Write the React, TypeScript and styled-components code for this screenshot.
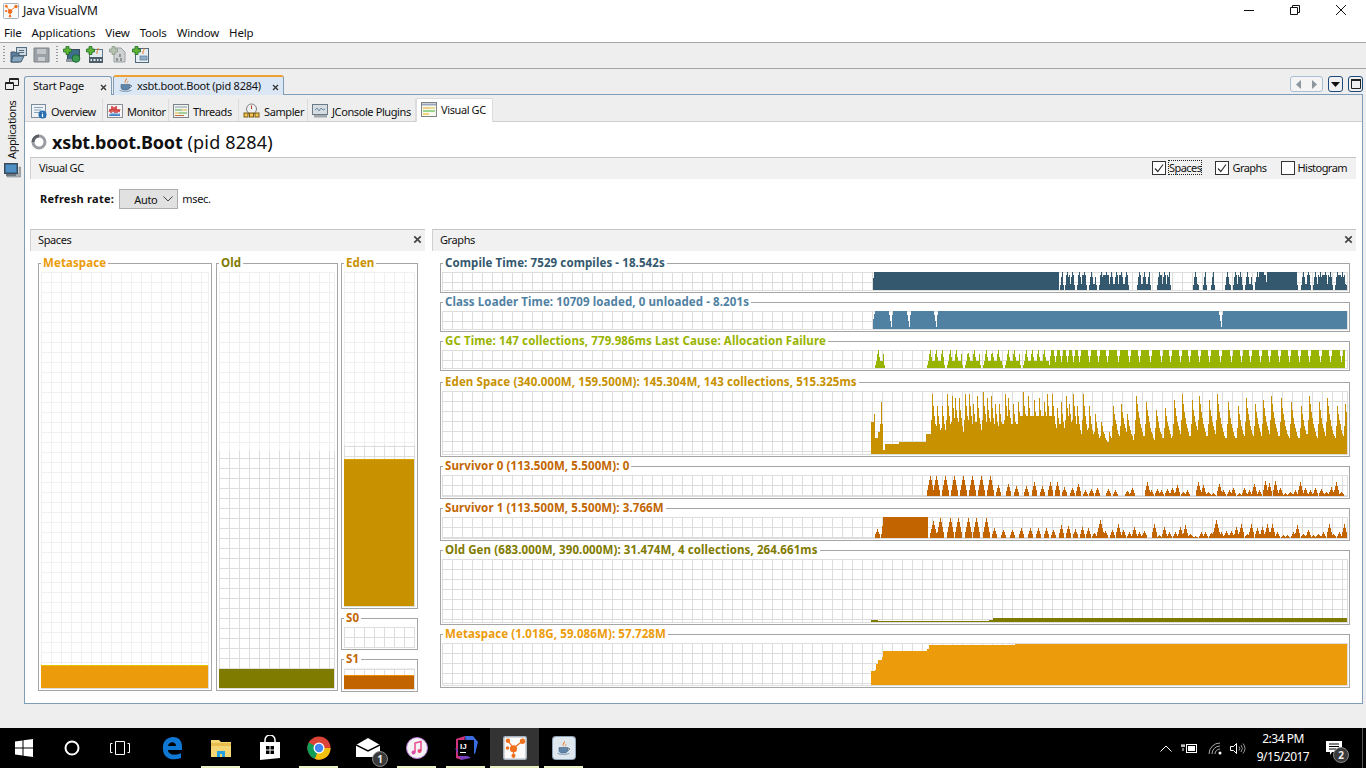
import React from 'react';
import styled, {createGlobalStyle} from 'styled-components';

const UI_FONT = '"Noto Sans", "Open Sans", sans-serif';
const CHART_W = 906;
const CHART_X0 = 442;

const GlobalStyle = createGlobalStyle`
  html, body {
    margin: 0;
    padding: 0;
    background: #eee;
  }
  * {
    box-sizing: border-box;
  }
`;

/* chart data */
let seed = 7;
const rnd = () => {
  seed = (seed * 16807) % 2147483647;
  return seed / 2147483647;
};
const at = (x: number) => x - CHART_X0;
const blank = () => new Array(CHART_W).fill(0) as number[];

const compileData = () => {
  const d = blank();
  for (let x = 873; x < 1059; x++) d[at(x)] = 18;
  d[at(873)] = 12;
  const bursts = [
    [1060, 1064], [1065, 1075], [1077, 1087], [1089, 1097], [1099, 1129], [1137, 1151],
    [1157, 1171], [1193, 1199], [1203, 1207], [1211, 1215], [1225, 1231], [1233, 1243],
    [1245, 1253], [1255, 1267], [1297, 1298], [1301, 1311], [1313, 1333], [1335, 1347],
  ];
  bursts.forEach(([a, b]) => {
    for (let x = a; x < b; x++) {
      const edge = Math.min(x - a, b - 1 - x);
      const t = (x - a) % 5;
      let h = t === 2 ? 18 : t === 1 || t === 3 ? 13 : 6;
      if (b - a > 9 && rnd() > 0.6) h = Math.max(h, 15);
      if (edge === 0) h = Math.min(h, 5);
      d[at(x)] = h;
    }
  });
  for (let x = 1267; x < 1297; x++) d[at(x)] = 18;
  for (let x = 1255; x < 1267; x++) d[at(x)] = Math.max(d[at(x)], x > 1258 && x < 1264 ? 18 : 8);
  return d;
};

const classData = () => {
  const d = blank();
  for (let x = 873; x < 1347; x++) d[at(x)] = 18;
  d[at(873)] = 10;
  d[at(874)] = 15;
  [889, 907, 934, 1219].forEach((n) => {
    d[at(n)] = 14;
    d[at(n + 1)] = 8;
    d[at(n + 2)] = 2;
    d[at(n + 3)] = 14;
  });
  return d;
};

const gcData = () => {
  const d = blank();
  const spikes = (a: number, b: number) => {
    for (let x = a; x < b; x++) {
      const t = (x - a) % 6;
      let h = t === 3 ? (rnd() > 0.3 ? 18 : 15) : t === 2 ? 14 : t === 4 ? 11 : 7;
      if (x === a || x === b - 1) h = 3;
      d[at(x)] = h;
    }
  };
  spikes(875, 885);
  [[927, 945], [947, 963], [965, 981], [983, 1003], [1005, 1021], [1023, 1050]].forEach(([a, b]) => spikes(a, b));
  let x = 1050;
  while (x < 1345) {
    const w = x < 1075 ? 6 : 9 + Math.floor(rnd() * 3);
    for (let i = 0; i < w && x + i < 1345; i++) {
      const h = i === w - 1 ? 6 : i === 0 || i === w - 2 ? 12 : 18;
      d[at(x + i)] = h;
    }
    x += w;
  }
  return d;
};

const edenPeaks = [
  [932, 60], [937, 48], [942, 47], [947, 60], [952, 57], [955, 55], [959, 55], [965, 60], [969, 60], [973, 50],
  [977, 57], [983, 61], [987, 56], [991, 57], [995, 50], [999, 50], [1005, 60], [1008, 55], [1013, 50], [1018, 52],
  [1023, 61], [1028, 58], [1034, 53], [1039, 55], [1044, 52], [1047, 60], [1052, 60], [1057, 46], [1061, 51],
  [1066, 58], [1069, 50], [1073, 60], [1077, 48], [1083, 60], [1089, 47], [1095, 40], [1101, 32], [1109, 22],
  [1113, 48], [1121, 49], [1127, 40], [1136, 58], [1146, 52], [1156, 44], [1165, 46], [1174, 54], [1182, 59],
  [1192, 53], [1199, 58], [1209, 53], [1217, 60], [1228, 51], [1238, 47], [1246, 55], [1255, 50], [1263, 54],
  [1271, 58], [1281, 55], [1291, 51], [1301, 47], [1309, 58], [1319, 51], [1327, 56], [1337, 48], [1345, 50],
];

const edenBase = (x: number) => {
  if (x < 871) return 0;
  if (x < 875) return 32;
  if (x < 878) return 15;
  if (x < 883) return 22;
  if (x < 885) return 3;
  if (x < 899) return 10;
  if (x < 921) return 11;
  if (x < 926) return 12;
  if (x < 931) return 20;
  if (x < 1000) return 14 + 8 * Math.abs(Math.sin(x / 9));
  if (x < 1020) return 30;
  if (x < 1053) return 38;
  if (x < 1060) return 10;
  if (x < 1100) return 15;
  if (x < 1106) return 4;
  return 7 + 4 * Math.abs(Math.sin(x / 6));
};

const edenData = () => {
  const d = blank();
  for (let x = 871; x < 1348; x++) {
    let h = edenBase(x);
    if (x >= 878 && x < 883) h = Math.max(h, 51 * Math.exp(-Math.abs(x - 881) / 2));
    if (x === 874) h = 39;
    if (x >= 926) {
      edenPeaks.forEach(([p, v]) => {
        const dist = Math.abs(x - p);
        const fall = p > 1100 ? 6 : 4.5;
        h = Math.max(h, v * Math.exp(-dist / (x < p ? 1.8 : fall)));
      });
    }
    d[at(x)] = Math.round(h / 2) * 2;
  }
  return d;
};

const teeth = (list: number[][]) => {
  const d = blank();
  list.forEach(([p, v]) => {
    const px = Math.round(p);
    const a = v >= 17 ? 3 : 2;
    for (let i = -a; i <= a; i++) {
      const x = at(px + i);
      if (x < 0 || x >= CHART_W) continue;
      const k = 1 - Math.abs(i) / (a + 1);
      d[x] = Math.max(d[x], Math.round(v * Math.pow(k, 0.85)));
    }
  });
  return d;
};

const fromZoom = (list: number[][]) => list.map(([z, h]) => [1150 + z / 3, h]);

const s0Data = () =>
  teeth([
    [930, 20], [936, 20], [945, 20], [954, 20], [963, 20], [972, 20], [981, 20], [990, 20], [998, 11], [1008, 12],
    [1016, 10], [1026, 10], [1034, 14], [1042, 10], [1050, 14], [1057, 14], [1064, 9], [1072, 8], [1078, 12],
    [1085, 6], [1091, 7], [1097, 8], [1108, 7], [1115, 6], [1127, 5], [1132, 8], [1147, 14],
    ...fromZoom([
      [3, 6], [21, 7], [33, 6], [51, 7], [66, 8], [81, 11], [100, 4], [111, 6], [144, 14], [158, 11], [174, 4],
      [190, 3], [208, 12], [220, 6], [238, 6], [250, 8], [268, 3], [283, 8], [298, 6], [312, 12], [328, 6],
      [346, 15], [358, 13], [374, 15], [390, 8], [405, 3], [420, 4], [436, 6], [450, 14], [465, 8], [481, 6],
      [494, 8], [513, 7], [528, 4], [543, 9], [558, 14], [573, 4],
    ]),
  ]);

const s1Data = () => {
  const d = teeth([
    [877, 9], [933, 17], [940, 20], [950, 20], [958, 20], [968, 20], [976, 20], [986, 20], [994, 10], [1003, 8],
    [1012, 8], [1021, 10], [1030, 10], [1038, 10], [1046, 10], [1053, 8], [1061, 13], [1068, 12], [1075, 9],
    [1082, 11], [1088, 10], [1094, 5], [1100, 18], [1105, 7], [1112, 8], [1118, 14], [1123, 8], [1129, 6],
    [1134, 11], [1139, 6], [1144, 7],
    ...fromZoom([
      [12, 14], [27, 3], [43, 11], [57, 6], [75, 6], [90, 11], [105, 13], [120, 4], [135, 2], [153, 6], [165, 6],
      [183, 5], [198, 18], [212, 6], [228, 7], [243, 7], [258, 11], [273, 14], [290, 4], [303, 14], [322, 10],
      [337, 11], [352, 14], [367, 14], [382, 6], [400, 3], [412, 3], [430, 6], [442, 13], [460, 4], [473, 8],
      [490, 3], [505, 4], [520, 6], [537, 14], [550, 4], [567, 6], [582, 14],
    ]),
  ]);
  for (let x = 883; x < 928; x++) d[at(x)] = 21;
  d[at(881)] = 4;
  d[at(882)] = 12;
  return d;
};

const oldData = () => {
  const d = blank();
  for (let x = 871; x < 1347; x++) {
    d[at(x)] = x < 878 ? 2 : x < 989 ? 1 : x < 993 ? 2 : 4;
  }
  return d;
};

const metaData = () => {
  const d = blank();
  const steps = [[871, 14], [875, 15], [876, 21], [878, 25], [882, 28], [883, 34], [927, 36], [929, 40], [1015, 41]];
  for (let x = 871; x < 1347; x++) {
    steps.forEach(([s, h]) => {
      if (x >= s) d[at(x)] = h;
    });
  }
  return d;
};

const stepPath = (data: number[], h: number) => {
  let p = '';
  data.forEach((v, x) => {
    if (v > 0) p += `M${x} ${h}V${h - v}h1V${h}z`;
  });
  return p;
};

interface ISeries {
  title: string;
  color: string;
  height: number;
  data: number[];
  spaced?: boolean;
}

const graphs: ISeries[] = [
  {title: 'Compile Time: 7529 compiles - 18.542s', color: '#34586e', height: 30, data: compileData()},
  {title: 'Class Loader Time: 10709 loaded, 0 unloaded - 8.201s', color: '#5081a3', height: 30, data: classData()},
  {title: 'GC Time: 147 collections, 779.986ms Last Cause: Allocation Failure', color: '#99b400', height: 30, data: gcData()},
  {title: 'Eden Space (340.000M, 159.500M): 145.304M, 143 collections, 515.325ms', color: '#c79100', height: 75, data: edenData(), spaced: true},
  {title: 'Survivor 0 (113.500M, 5.500M): 0', color: '#c26500', height: 33, data: s0Data()},
  {title: 'Survivor 1 (113.500M, 5.500M): 3.766M', color: '#c26500', height: 33, data: s1Data()},
  {title: 'Old Gen (683.000M, 390.000M): 31.474M, 4 collections, 264.661ms', color: '#7f7a00', height: 75, data: oldData()},
  {title: 'Metaspace (1.018G, 59.086M): 57.728M', color: '#ec9b0a', height: 54, data: metaData()},
];

/* window frame */
const Page = styled.div`
  width: 1366px;
  height: 768px;
  display: flex;
  flex-direction: column;
  overflow: hidden;
  background: #eee;
  color: #111;
  font-family: ${UI_FONT};
`;
const TitleBar = styled.div`
  height: 22px;
  background: #fff;
  display: flex;
  align-items: flex-start;
  padding-left: 3px;
`;
const TitleIcon = styled.span`
  display: flex;
  margin-top: 3px;
`;
const TitleText = styled.span`
  margin: 3px 0 0 4px;
  font-size: 12px;
  line-height: 16px;
  letter-spacing: -0.2px;
`;
const WindowButtons = styled.div`
  margin-left: auto;
  display: flex;
  padding-right: 2px;
`;
const WindowButton = styled.span`
  width: 46px;
  height: 22px;
  display: flex;
  align-items: flex-start;
  justify-content: center;
  padding-top: 4px;
`;
const MenuBar = styled.div`
  height: 20px;
  background: #fff;
  display: flex;
  gap: 10px;
  padding: 2px 0 0 4px;
  font-size: 11.5px;
  line-height: 17px;
  letter-spacing: -0.2px;
`;
const ToolBar = styled.div`
  height: 27px;
  background: #eee;
  border-top: 1px solid #a5a5a5;
  border-bottom: 1px solid #a5a5a5;
  display: flex;
  align-items: center;
  padding: 0 0 2px 3px;
`;
const Grip = styled.span`
  width: 3px;
  height: 18px;
  margin-right: 1px;
  background-image: linear-gradient(#999 50%, transparent 50%);
  background-size: 2px 3px;
  background-repeat: repeat-y;
`;
const ToolIcon = styled.span`
  width: 23px;
  height: 18px;
  display: flex;
  justify-content: center;
  align-items: center;
`;
const ToolGap = styled.span`
  width: 3px;
`;
const Workspace = styled.div`
  flex: 1;
  min-height: 0;
  display: flex;
`;
const SideStrip = styled.div`
  width: 24px;
  display: flex;
  flex-direction: column;
  align-items: center;
  padding-top: 9px;
`;
const SideLabel = styled.span`
  writing-mode: vertical-rl;
  transform: rotate(180deg);
  font-size: 11px;
  line-height: 13px;
  margin: 10px 2px 0 0;
  height: 59px;
  letter-spacing: -0.4px;
  text-align: left;
`;
const SideIcon = styled.span`
  display: flex;
  margin-top: 4px;
`;
const Main = styled.div`
  flex: 1;
  display: flex;
  flex-direction: column;
  padding: 7px 3px 24px 0;
  min-width: 0;
`;
const DocTabs = styled.div`
  height: 19px;
  display: flex;
  align-items: flex-end;
  gap: 1px;
  position: relative;
  z-index: 1;
  margin-bottom: -1px;
`;
const DocTab = styled.div<{$active?: boolean; $width: number}>`
  width: ${(p) => p.$width}px;
  height: ${(p) => (p.$active ? 20 : 19)}px;
  display: flex;
  align-items: center;
  gap: 3px;
  padding: 0 4px 2px ${(p) => (p.$active ? 4 : 8)}px;
  border: 1px solid #7f9db9;
  border-bottom: none;
  border-radius: 3px 3px 0 0;
  border-top: ${(p) => (p.$active ? '2px solid #f0a030' : '1px solid #7f9db9')};
  background: ${(p) => (p.$active ? '#dce7f5' : '#eee')};
  font-size: 11px;
  letter-spacing: -0.25px;
  white-space: nowrap;
`;
const DocClose = styled.span`
  margin-left: auto;
  display: flex;
  margin-top: 4px;
`;
const DocControls = styled.div`
  margin-left: auto;
  display: flex;
  gap: 5px;
  align-self: flex-start;
`;
const NavGroup = styled.span`
  width: 33px;
  height: 16px;
  border: 1px solid #a9bfd6;
  border-radius: 3px;
  display: flex;
  align-items: center;
  justify-content: space-around;
  background: #f4f4f4;
`;
const DocButton = styled.span`
  width: 15px;
  height: 16px;
  border: 1px solid #1d4a7a;
  border-radius: 3px;
  display: flex;
  align-items: center;
  justify-content: center;
  background: #f0f0f0;
`;
const DocPanel = styled.div`
  flex: 1;
  min-height: 0;
  border: 1px solid #7f9db9;
  background: #fff;
  display: flex;
  flex-direction: column;
`;
const ViewTabs = styled.div`
  height: 27px;
  background: #eee;
  border-bottom: 1px solid #cfcfcf;
  display: flex;
  padding-left: 2px;
  align-items: flex-end;
`;
const ViewTab = styled.div<{$active?: boolean; $width: number}>`
  width: ${(p) => p.$width}px;
  height: ${(p) => (p.$active ? 24 : 22)}px;
  margin-bottom: ${(p) => (p.$active ? -1 : 0)}px;
  display: flex;
  align-items: center;
  gap: 4px;
  padding: ${(p) => (p.$active ? '0 0 3px 4px' : '2px 0 0 4px')};
  background: ${(p) => (p.$active ? '#fff' : 'transparent')};
  border-right: 1px solid #dcdcdc;
  border-left: ${(p) => (p.$active ? '1px solid #dcdcdc' : 'none')};
  border-top: ${(p) => (p.$active ? '1px solid #dcdcdc' : 'none')};
  font-size: 11px;
  letter-spacing: -0.4px;
  white-space: nowrap;
`;
const ViewBody = styled.div`
  flex: 1;
  min-height: 0;
  padding: 0 6px 0 5px;
  display: flex;
  flex-direction: column;
`;
const Heading = styled.div`
  height: 35px;
  display: flex;
  align-items: center;
  gap: 5px;
  padding: 4px 0 0 1px;
  font-size: 18px;
  letter-spacing: 0.2px;
`;
const HeadingName = styled.b`
  font-weight: 700;
  letter-spacing: -0.15px;
`;
const SectionBar = styled.div`
  height: 22px;
  flex: none;
  background: #f1f1f1;
  border-top: 1px solid #c4c4c4;
  border-left: 1px solid #d0d0d0;
  display: flex;
  align-items: center;
  padding: 0 9px 2px 8px;
  font-size: 11px;
  letter-spacing: -0.4px;
`;
const Check = styled.label`
  display: flex;
  align-items: center;
  gap: 3px;
  margin-left: 14px;
`;
const CheckBox = styled.span`
  width: 14px;
  height: 14px;
  border: 1px solid #333;
  background: #fff;
  display: flex;
  align-items: center;
  justify-content: center;
`;
const CheckText = styled.span<{$focused?: boolean}>`
  outline: ${(p) => (p.$focused ? '1px dotted #222' : 'none')};
  line-height: 13px;
  letter-spacing: -0.55px;
`;
const CheckRow = styled.div`
  margin-left: auto;
  display: flex;
`;
const RefreshRow = styled.div`
  height: 50px;
  flex: none;
  display: flex;
  align-items: flex-start;
  padding: 10px 0 0 10px;
  font-size: 11px;
  letter-spacing: -0.3px;
`;
const RefreshLabel = styled.b`
  line-height: 20px;
  margin-right: 5px;
  letter-spacing: 0.28px;
`;
const RefreshSelect = styled.span`
  width: 59px;
  height: 20px;
  background: #e1e1e1;
  border: 1px solid #adadad;
  display: flex;
  align-items: center;
  justify-content: space-between;
  padding: 0 4px 0 14px;
  margin-right: 4px;
`;
const RefreshUnit = styled.span`
  line-height: 20px;
`;
const Panels = styled.div`
  flex: 1;
  min-height: 0;
  display: flex;
  gap: 7px;
`;
const Panel = styled.div<{$width: number}>`
  width: ${(p) => p.$width}px;
  flex: none;
`;
const PanelBar = styled(SectionBar)`
  justify-content: space-between;
  padding-left: 7px;
  padding-right: 3px;
`;
const SpacesBody = styled.div`
  padding: 12px 0 0 8px;
  display: flex;
  gap: 4px;
`;
const GraphsBody = styled.div`
  padding: 12px 6px 0 8px;
  display: flex;
  flex-direction: column;
  gap: 9px;
`;
const SpaceColumn = styled.div`
  display: flex;
  flex-direction: column;
  gap: 9px;
  margin-left: -1px;
`;
const Group = styled.div<{$width?: number; $height: number; $color: string; $pad?: string; $spaced?: boolean}>`
  position: relative;
  width: ${(p) => (p.$width ? `${p.$width}px` : 'auto')};
  height: ${(p) => p.$height}px;
  flex: none;
  margin-top: ${(p) => (p.$spaced ? 2 : 0)}px;
  border: 1px solid #a5a5a5;
  padding: ${(p) => p.$pad || '8px 1px 1px 1px'};
  display: flex;
  flex-direction: column;
  color: ${(p) => p.$color};
`;
const Legend = styled.span`
  position: absolute;
  top: -9px;
  left: 2px;
  padding: 0 2px;
  background: #fff;
  font-size: 11.5px;
  line-height: 15px;
  font-weight: 700;
  letter-spacing: 0.1px;
  white-space: nowrap;
`;
const Plot = styled.div`
  flex: 1;
  min-height: 0;
  display: flex;
  align-items: flex-end;
  border-right: 1px solid #ddd;
  border-bottom: 1px solid #ddd;
  background-image: linear-gradient(#ddd 1px, transparent 1px), linear-gradient(90deg, #ddd 1px, transparent 1px);
  background-size: 10px 10px;
  overflow: hidden;
  & > svg {
    flex: none;
  }
`;
const SpacePlot = styled.div`
  flex: 1;
  min-height: 0;
  display: flex;
  flex-direction: column;
`;
const MaxArea = styled.div`
  flex: 1;
  background-image: linear-gradient(#f0f0f0 1px, transparent 1px), linear-gradient(90deg, #f0f0f0 1px, transparent 1px);
  background-size: 10px 10px;
  border-right: 1px solid #f0f0f0;
`;
const Committed = styled(Plot)<{$height: number}>`
  flex: none;
  height: ${(p) => p.$height}px;
  background-position: left bottom;
`;
const Fill = styled.div<{$height: number; $color: string; $top: string}>`
  width: 100%;
  height: ${(p) => p.$height}px;
  background: ${(p) => p.$color};
  border-top: 1px solid ${(p) => p.$top};
`;

/* task bar */
const TaskBar = styled.div`
  height: 40px;
  flex: none;
  background: #000;
  color: #fff;
  display: flex;
  align-items: stretch;
`;
const TaskSlot = styled.span`
  width: 48px;
  display: flex;
  align-items: center;
  justify-content: center;
`;
const TaskApps = styled.div`
  margin-left: 3px;
  display: flex;
`;
const TaskApp = styled.span<{$running?: boolean; $active?: boolean}>`
  position: relative;
  width: 49px;
  display: flex;
  align-items: center;
  justify-content: center;
  background: ${(p) => (p.$active ? '#333' : 'transparent')};
  &::after {
    content: '';
    display: ${(p) => (p.$running ? 'block' : 'none')};
    position: absolute;
    bottom: 0;
    left: ${(p) => (p.$active ? 0 : 5)}px;
    right: ${(p) => (p.$active ? 0 : 5)}px;
    height: 2px;
    background: #e8f0c4;
  }
`;
const Badge = styled.span`
  position: absolute;
  width: 16px;
  height: 16px;
  border-radius: 50%;
  background: #3a3a3a;
  border: 1px solid #888;
  font-size: 10px;
  font-weight: 700;
  line-height: 14px;
  text-align: center;
  color: #eee;
`;
const MailBadge = styled(Badge)`
  right: 4px;
  bottom: 1px;
`;
const Tray = styled.div`
  margin-left: auto;
  display: flex;
  align-items: center;
  font-size: 12px;
`;
const TrayIcon = styled.span<{$width: number}>`
  width: ${(p) => p.$width}px;
  display: flex;
  justify-content: center;
`;
const Clock = styled.div`
  width: 70px;
  text-align: center;
  line-height: 18px;
  letter-spacing: -0.5px;
`;
const ClockLine = styled.div``;
const Notify = styled.span`
  position: relative;
  width: 45px;
  height: 100%;
  display: flex;
  align-items: center;
  padding-left: 8px;
  margin-right: 3px;
  border-right: 1px solid #555;
`;
const NotifyBadge = styled(Badge)`
  left: 15px;
  bottom: 5px;
`;

/* icons */
const VmLogo = ({size = 16}: {size?: number}) => (
  <svg width={size} height={size} viewBox="0 0 16 16">
    <rect x=".5" y=".5" width="15" height="15" rx="1" fill="#fbfbfb" stroke="#a9b3bd" />
    <g fill="#f0701e" stroke="#f0701e">
      <path d="M3.500 3.500L7 8M7 8l6-4.500M7 8v5" strokeWidth=".8" />
      <circle cx="3.300" cy="3.200" r="1" />
      <circle cx="13" cy="3.500" r="1.300" />
      <circle cx="7" cy="8.500" r="1.900" />
      <circle cx="3" cy="8" r=".7" />
      <circle cx="7" cy="13.200" r=".9" />
    </g>
  </svg>
);

const JavaCup = ({size = 16}: {size?: number}) => (
  <svg width={size} height={size} viewBox="0 0 16 16">
    <path d="M8.500 1C10 3 6.500 4 7.500 6.500 5.500 5 7.500 3 8.500 1zM10.500 3.500c.5 1.500-2 2-1.200 3.500-1.500-1.200.5-2.500 1.200-3.500z" fill="#e8761e" />
    <path d="M3 7.500h8.500v3.200c0 1.600-1.600 2.300-4.200 2.300S3 12.300 3 10.700z" fill="#5f86a8" stroke="#44627e" strokeWidth=".6" />
    <path d="M11.500 8.300h1.300c1.200 0 .9 2.200-1.500 2.400" fill="none" stroke="#44627e" />
    <path d="M1.500 13.300c2.500 1.500 9.500 1.500 12 0" fill="none" stroke="#7c99b3" />
  </svg>
);

const PlusBadge = ({muted}: {muted?: boolean}) => (
  <path
    d="M2.500 0h3v2.500H8v3H5.500V8h-3V5.500H0v-3h2.500z"
    fill={muted ? '#b5c4b0' : '#5cb531'}
    stroke={muted ? '#8d9a8a' : '#1f6b2a'}
    strokeWidth=".8"
    transform="translate(.5 .5)"
  />
);

const OpenIcon = () => (
  <svg width="17" height="16" viewBox="0 0 17 16">
    <rect x="6.500" y=".5" width="10" height="8" fill="#cfd9e2" stroke="#566d80" />
    <path d="M9 3.500h5M9 5.500h5" stroke="#566d80" />
    <path d="M1 5h4l1 1h3v9H1z" fill="#5d7f9a" stroke="#405a70" />
    <path d="M1 15l2-6h11l-3 6z" fill="#87a5bd" stroke="#405a70" />
  </svg>
);
const SaveIcon = () => (
  <svg width="17" height="16" viewBox="0 0 17 16">
    <path d="M1 1h15v14H1z" fill="#9aa0a5" stroke="#7f858a" />
    <rect x="4" y="2" width="9" height="5" fill="#c2c6c9" />
    <rect x="5" y="10" width="7" height="4" fill="#c9ccce" />
  </svg>
);
const AddHostIcon = () => (
  <svg width="18" height="17" viewBox="0 0 18 17">
    <rect x="4.500" y="3.500" width="12" height="10" fill="#3d6f8c" stroke="#3c4a55" />
    <rect x="3" y="13" width="11" height="3" fill="#8c959c" />
    <circle cx="13" cy="12.500" r="3.800" fill="#3c9a52" stroke="#1c6a34" />
    <PlusBadge />
  </svg>
);
const AddJmxIcon = () => (
  <svg width="17" height="17" viewBox="0 0 17 17">
    <rect x="3.500" y="3.500" width="13" height="13" fill="#e4ebf1" stroke="#62798c" />
    <rect x="3" y="11" width="14" height="6" fill="#4c5c68" />
    <path d="M4.500 14h1.500M7.500 14h2M11 14h1.500M14 14h1.500" stroke="#e8edf0" strokeWidth="2" />
    <path d="M12 2c1 2-2 3-1 6" fill="none" stroke="#e8761e" />
    <PlusBadge />
  </svg>
);
const AddDumpIcon = () => (
  <svg width="17" height="17" viewBox="0 0 17 17">
    <path d="M5 2h7l4 4v10H5z" fill="#cfd2d2" stroke="#9b9f9f" />
    <path d="M10 8h2v3h-2zM7 12h2v3H7zM11 12h2v3h-2z" fill="#8f9393" />
    <PlusBadge muted />
  </svg>
);
const AddSnapIcon = () => (
  <svg width="17" height="17" viewBox="0 0 17 17">
    <rect x="3.500" y="2.500" width="13" height="14" fill="#e6edf3" stroke="#52697d" />
    <rect x="8" y="10" width="7" height="4" fill="#8fb0cc" stroke="#52697d" strokeWidth=".6" />
    <path d="M12 2c1 2-2 3-1 6" fill="none" stroke="#e8761e" />
    <PlusBadge />
  </svg>
);
const OverviewIcon = () => (
  <svg width="16" height="16" viewBox="0 0 16 16">
    <rect x=".5" y="1.500" width="14" height="13" fill="#eef2f6" stroke="#7d8c99" />
    <path d="M3 4.500h9M3 7h7M3 9.500h5" stroke="#8ea3b5" />
    <circle cx="11.500" cy="11.500" r="4" fill="#2a6fb0" />
    <path d="M11.500 9.500v.8M11.500 11v3" stroke="#fff" strokeWidth="1.200" />
  </svg>
);
const MonitorIcon = () => (
  <svg width="16" height="16" viewBox="0 0 16 16">
    <rect x=".5" y="1.500" width="15" height="13" fill="#f6f4f4" stroke="#8a8f94" />
    <path d="M2 9l1-3 1 4 1-7 1 6 1-5 1 6 1-7 1 7 1-4 1 3 1-3" fill="none" stroke="#d03a3a" />
    <path d="M2 13l1-3 1 2 1-3 1 3 1-3 1 3 1-3 1 3 1-2 1 2 1-3v4z" fill="#3f7fc8" />
  </svg>
);
const ThreadsIcon = () => (
  <svg width="16" height="16" viewBox="0 0 16 16">
    <rect x=".5" y="1.500" width="15" height="13" fill="#f2f3f3" stroke="#7d8286" />
    <path d="M2 4h12" stroke="#8b98a5" />
    <path d="M2 7h7" stroke="#55a846" />
    <path d="M9 7h5" stroke="#e2b52e" />
    <path d="M2 10h4" stroke="#e2b52e" />
    <path d="M6 10h8" stroke="#55a846" />
    <path d="M2 12.500h9" stroke="#c96a3a" />
  </svg>
);
const SamplerIcon = () => (
  <svg width="17" height="16" viewBox="0 0 17 16">
    <circle cx="8.500" cy="6" r="5" fill="#eef0f2" stroke="#7d7f84" />
    <path d="M8.500 6V2.500" stroke="#c03a2a" />
    <path d="M4 10.500h9" stroke="#9a6a14" />
    <rect x="1" y="10" width="4" height="4" fill="#f3c552" stroke="#7a5a12" />
    <rect x="6.500" y="10" width="4" height="4" fill="#f3c552" stroke="#7a5a12" />
    <rect x="12" y="10" width="4" height="4" fill="#f3c552" stroke="#7a5a12" />
  </svg>
);
const ConsoleIcon = () => (
  <svg width="16" height="16" viewBox="0 0 16 16">
    <rect x=".5" y="1.500" width="15" height="10" fill="#d6dde2" stroke="#6e7a84" />
    <path d="M3 7l2-2 2 3 2-3 2 2 2-1" fill="none" stroke="#6e8aa0" />
    <rect x="2" y="12" width="13" height="2.500" fill="#a1a8ad" />
  </svg>
);
const GcIcon = () => (
  <svg width="16" height="15" viewBox="0 0 16 15">
    <rect x=".5" y=".5" width="15" height="14" fill="#f9f9ef" stroke="#7e8488" />
    <path d="M1 2.500h14" stroke="#9aa5c0" strokeWidth="2" />
    <path d="M2 6h7" stroke="#e0a020" />
    <path d="M9 6h5" stroke="#d8c23a" />
    <path d="M2 9h12" stroke="#39b02c" />
    <path d="M2 12h6" stroke="#f0b000" />
  </svg>
);
const CloseMark = ({color = '#333', size = 7}: {color?: string; size?: number}) => (
  <svg width={size} height={size} viewBox="0 0 7 7">
    <path d="M1 1l5 5M6 1L1 6" stroke={color} strokeWidth="1.300" />
  </svg>
);
const Tick = () => (
  <svg width="12" height="12" viewBox="0 0 12 12">
    <path d="M2 6.500L4.800 9.500 10 2.500" fill="none" stroke="#333" strokeWidth="1.200" />
  </svg>
);
const Spinner = () => (
  <svg width="16" height="16" viewBox="0 0 16 16">
    <circle cx="8" cy="8" r="6" fill="none" stroke="#9a9ea3" strokeWidth="3" />
    <path d="M2 8a6 6 0 0 1 6-6" fill="none" stroke="#5c6066" strokeWidth="3" />
  </svg>
);

const SpaceGroup = ({
  title, color, width, height, committed, fill, top,
}: {
  title: string; color: string; width?: number; height: number; committed: number; fill?: number; top?: string;
}) => (
  <Group $width={width} $height={height} $color={color} $pad="8px 2px 1px 2px">
    <Legend>{title}</Legend>
    <SpacePlot>
      <MaxArea />
      <Committed $height={committed}>
        {fill ? <Fill $height={fill} $color={color} $top={top || color} /> : null}
      </Committed>
    </SpacePlot>
  </Group>
);

export default function App() {
  return (
    <Page>
      <GlobalStyle />
      <TitleBar>
        <TitleIcon><VmLogo /></TitleIcon>
        <TitleText>Java VisualVM</TitleText>
        <WindowButtons>
          <WindowButton>
            <svg width="12" height="12" viewBox="0 0 12 12"><path d="M1 6.500h10" stroke="#111" /></svg>
          </WindowButton>
          <WindowButton>
            <svg width="12" height="12" viewBox="0 0 12 12"><path d="M1.500 3.500h7v7h-7zM3.500 3.500v-2h7v7h-2" fill="none" stroke="#111" /></svg>
          </WindowButton>
          <WindowButton>
            <svg width="12" height="12" viewBox="0 0 12 12"><path d="M1 1l10 10M11 1L1 11" stroke="#111" /></svg>
          </WindowButton>
        </WindowButtons>
      </TitleBar>
      <MenuBar>
        <span>File</span>
        <span>Applications</span>
        <span>View</span>
        <span>Tools</span>
        <span>Window</span>
        <span>Help</span>
      </MenuBar>
      <ToolBar>
        <Grip />
        <ToolIcon><OpenIcon /></ToolIcon>
        <ToolIcon><SaveIcon /></ToolIcon>
        <ToolGap />
        <Grip />
        <ToolIcon><AddHostIcon /></ToolIcon>
        <ToolIcon><AddJmxIcon /></ToolIcon>
        <ToolIcon><AddDumpIcon /></ToolIcon>
        <ToolIcon><AddSnapIcon /></ToolIcon>
      </ToolBar>
      <Workspace>
        <SideStrip>
          <svg width="14" height="12" viewBox="0 0 14 12">
            <path d="M.5 4.500h8v7h-8zM4.500 4.500v-4h9v7h-5" fill="none" stroke="#222" />
            <path d="M.5 5.500h8M4.500 1.500h9" stroke="#222" />
          </svg>
          <SideLabel>Applications</SideLabel>
          <SideIcon>
            <svg width="17" height="15" viewBox="0 0 17 15">
              <path d="M15 4h1.500v10H3v-3h12z" fill="#a9b0b5" stroke="#7b8186" strokeWidth=".6" />
              <rect x=".5" y=".5" width="13" height="10" fill="#3b6f98" stroke="#3d4a55" />
              <rect x="2" y="2" width="10" height="7" fill="#4f8fc4" />
              <rect x="2" y="11" width="10" height="2" fill="#6d767d" />
            </svg>
          </SideIcon>
        </SideStrip>
        <Main>
          <DocTabs>
            <DocTab $width={88}>
              Start Page
              <DocClose><CloseMark /></DocClose>
            </DocTab>
            <DocTab $active $width={171}>
              <JavaCup />
              xsbt.boot.Boot (pid 8284)
              <DocClose><CloseMark /></DocClose>
            </DocTab>
            <DocControls>
              <NavGroup>
                <svg width="6" height="9" viewBox="0 0 6 9"><path d="M5 0v9L0 4.500z" fill="#8c969f" /></svg>
                <svg width="6" height="9" viewBox="0 0 6 9"><path d="M1 0v9l5-4.500z" fill="#8c969f" /></svg>
              </NavGroup>
              <DocButton>
                <svg width="9" height="5" viewBox="0 0 9 5"><path d="M0 0h9L4.500 5z" fill="#111" /></svg>
              </DocButton>
              <DocButton>
                <svg width="10" height="10" viewBox="0 0 10 10"><path d="M.5 1.500h9v8h-9z" fill="none" stroke="#222" /><path d="M0 1h10" stroke="#222" strokeWidth="2" /></svg>
              </DocButton>
            </DocControls>
          </DocTabs>
          <DocPanel>
            <ViewTabs>
              <ViewTab $width={76}><OverviewIcon />Overview</ViewTab>
              <ViewTab $width={66}><MonitorIcon />Monitor</ViewTab>
              <ViewTab $width={70}><ThreadsIcon />Threads</ViewTab>
              <ViewTab $width={69}><SamplerIcon />Sampler</ViewTab>
              <ViewTab $width={108}><ConsoleIcon />JConsole Plugins</ViewTab>
              <ViewTab $active $width={77}><GcIcon />Visual GC</ViewTab>
            </ViewTabs>
            <ViewBody>
              <Heading>
                <Spinner />
                <span><HeadingName>xsbt.boot.Boot</HeadingName> (pid 8284)</span>
              </Heading>
              <SectionBar>
                Visual GC
                <CheckRow>
                  <Check><CheckBox><Tick /></CheckBox><CheckText $focused>Spaces</CheckText></Check>
                  <Check><CheckBox><Tick /></CheckBox><CheckText>Graphs</CheckText></Check>
                  <Check><CheckBox /><CheckText>Histogram</CheckText></Check>
                </CheckRow>
              </SectionBar>
              <RefreshRow>
                <RefreshLabel>Refresh rate:</RefreshLabel>
                <RefreshSelect>
                  Auto
                  <svg width="10" height="6" viewBox="0 0 10 6"><path d="M.5.500L5 5 9.500.5" fill="none" stroke="#444" /></svg>
                </RefreshSelect>
                <RefreshUnit>msec.</RefreshUnit>
              </RefreshRow>
              <Panels>
                <Panel $width={395}>
                  <PanelBar>
                    Spaces
                    <CloseMark color="#444" size={9} />
                  </PanelBar>
                  <SpacesBody>
                    <SpaceGroup title="Metaspace" color="#ec9b0a" top="#e8c400" width={174} height={428} committed={24} fill={23} />
                    <SpaceGroup title="Old" color="#7f7a00" top="#807a00" width={122} height={428} committed={238} fill={19} />
                    <SpaceColumn>
                      <SpaceGroup title="Eden" color="#c79100" top="#d8a000" width={77} height={346} committed={162} fill={147} />
                      <SpaceGroup title="S0" color="#c26500" width={77} height={32} committed={21} />
                      <SpaceGroup title="S1" color="#c26500" top="#ee8a00" width={77} height={33} committed={21} fill={14} />
                    </SpaceColumn>
                  </SpacesBody>
                </Panel>
                <Panel $width={924}>
                  <PanelBar>
                    Graphs
                    <CloseMark color="#444" size={9} />
                  </PanelBar>
                  <GraphsBody>
                    {graphs.map((g) => (
                      <Group key={g.title} $height={g.height} $color={g.color} $spaced={g.spaced}>
                        <Legend>{g.title}</Legend>
                        <Plot>
                          <svg width={CHART_W} height={g.height - 11} viewBox={`0 0 ${CHART_W} ${g.height - 11}`} shapeRendering="crispEdges">
                            <path d={stepPath(g.data, g.height - 11)} fill={g.color} />
                          </svg>
                        </Plot>
                      </Group>
                    ))}
                  </GraphsBody>
                </Panel>
              </Panels>
            </ViewBody>
          </DocPanel>
        </Main>
      </Workspace>
      <TaskBar>
        <TaskSlot>
          <svg width="18" height="18" viewBox="0 0 18 18"><path d="M0 2.500l7.500-1v7H0zM8.500 1.300L18 0v8.500H8.500zM0 9.500h7.500v7l-7.500-1zM8.500 9.500H18V18l-9.500-1.300z" fill="#fff" /></svg>
        </TaskSlot>
        <TaskSlot>
          <svg width="16" height="16" viewBox="0 0 16 16"><circle cx="8" cy="8" r="6.500" fill="none" stroke="#fff" strokeWidth="2" /></svg>
        </TaskSlot>
        <TaskSlot>
          <svg width="22" height="16" viewBox="0 0 22 16"><path d="M6.500 1.500h9v13h-9z" fill="none" stroke="#fff" /><path d="M3.500 3.500h-2v9h2M18.500 3.500h2v9h-2" fill="none" stroke="#fff" /></svg>
        </TaskSlot>
        <TaskApps>
          <TaskApp>
            <svg width="22" height="24" viewBox="0 0 22 24"><path d="M2 13C1 5 7 1 12 1c6 0 9 4 9 10v3H7c0 5 8 6 13 3v5c-8 3-18 1-18-9zm5-3h8c0-5-7-5-8 0z" fill="#0f78d4" /></svg>
          </TaskApp>
          <TaskApp $running>
            <svg width="22" height="22" viewBox="0 0 22 22">
              <path d="M1 3h8l2 2h10v15H1z" fill="#f5d675" />
              <path d="M1 6h20v3H1z" fill="#e8bd50" />
              <path d="M7 20v-6h8v6h-3v-3h-2v3z" fill="#27a0e0" />
            </svg>
          </TaskApp>
          <TaskApp>
            <svg width="22" height="26" viewBox="0 0 22 26">
              <path d="M6 8V5a5 5 0 0 1 10 0v3" fill="none" stroke="#fff" strokeWidth="1.500" />
              <path d="M1 7h20v16l-20 2z" fill="#fff" />
              <path d="M7 11h3.500v3.500H7zM11.500 11H15v3.500h-3.500zM7 15.500h3.500V19H7zM11.500 15.500H15V19h-3.500z" fill="#000" />
            </svg>
          </TaskApp>
          <TaskApp $running>
            <svg width="24" height="24" viewBox="0 0 24 24">
              <circle cx="12" cy="12" r="11.500" fill="#db4437" />
              <path d="M12 12L1.700 6.500A11.500 11.500 0 0 0 8 22.800z" fill="#0f9d58" />
              <path d="M12 12L8 23a11.500 11.500 0 0 0 15.500-11z" fill="#f4c20d" />
              <circle cx="12" cy="12" r="5.500" fill="#fff" />
              <circle cx="12" cy="12" r="4.200" fill="#4285f4" />
            </svg>
          </TaskApp>
          <TaskApp>
            <svg width="24" height="20" viewBox="0 0 24 20">
              <path d="M0 7l12-7 12 7v12H0z" fill="#fff" />
              <path d="M0 7l12 6 12-6" fill="none" stroke="#000" strokeWidth="1.500" />
            </svg>
            <MailBadge>1</MailBadge>
          </TaskApp>
          <TaskApp $running>
            <svg width="22" height="22" viewBox="0 0 22 22">
              <circle cx="11" cy="11" r="10.500" fill="#f5f2f5" stroke="#b678d8" />
              <path d="M9 15.500V6l6-1.500V14" fill="none" stroke="#e84a8c" strokeWidth="1.500" />
              <circle cx="7.500" cy="15.500" r="2" fill="#d850a8" />
              <circle cx="13.500" cy="14" r="2" fill="#e84a7c" />
            </svg>
          </TaskApp>
          <TaskApp $running>
            <svg width="24" height="24" viewBox="0 0 24 24">
              <path d="M2 3l9-3-3 24-6-2z" fill="#d1337c" />
              <path d="M11 0h8l5 6-3 12-8-2z" fill="#3a6de0" />
              <path d="M1 12l6 12 10-2z" fill="#7a3fc0" />
              <rect x="4" y="4" width="16" height="16" fill="#000" />
              <text x="6" y="13" fontFamily="Liberation Sans, sans-serif" fontSize="8" fontWeight="700" fill="#fff">IJ</text>
              <path d="M6 16.500h6" stroke="#fff" />
            </svg>
          </TaskApp>
          <TaskApp $active $running><VmLogo size={24} /></TaskApp>
          <TaskApp $running>
            <svg width="24" height="24" viewBox="0 0 24 24">
              <rect x=".5" y=".5" width="23" height="23" rx="3" fill="#dfe7ee" stroke="#8da2b5" />
              <g transform="translate(4 4)"><JavaCup /></g>
            </svg>
          </TaskApp>
        </TaskApps>
        <Tray>
          <TrayIcon $width={20}>
            <svg width="12" height="7" viewBox="0 0 12 7"><path d="M.5 6.500L6 1l5.500 5.500" fill="none" stroke="#fff" /></svg>
          </TrayIcon>
          <TrayIcon $width={26}>
            <svg width="17" height="11" viewBox="0 0 17 11"><rect x="5.500" y="1.500" width="10" height="8" fill="none" stroke="#fff" /><rect x="7" y="3" width="7" height="5" fill="#fff" /><path d="M0 3h4M1 1v3M3 1v3M2 5v3" stroke="#fff" /></svg>
          </TrayIcon>
          <TrayIcon $width={26}>
            <svg width="15" height="13" viewBox="0 0 15 13"><path d="M1 12A11 11 0 0 1 12 1M4 12a8 8 0 0 1 8-8M7 12a5 5 0 0 1 5-5" fill="none" stroke="#aaa" /><circle cx="12" cy="11" r="1.500" fill="#fff" /></svg>
          </TrayIcon>
          <TrayIcon $width={20}>
            <svg width="16" height="13" viewBox="0 0 16 13"><path d="M.5 4.500h3l3-3v10l-3-3h-3z" fill="none" stroke="#fff" /><path d="M9 4.500a3 3 0 0 1 0 4M11 3a5.500 5.500 0 0 1 0 7M13 1.500a8 8 0 0 1 0 10" fill="none" stroke="#999" /></svg>
          </TrayIcon>
          <Clock>
            <ClockLine>2:34 PM</ClockLine>
            <ClockLine>9/15/2017</ClockLine>
          </Clock>
          <Notify>
            <svg width="16" height="14" viewBox="0 0 16 14"><path d="M0 0h16v11H6l-2 3v-3H0z" fill="#fff" /><path d="M3 3h10M3 5.500h10M3 8h7" stroke="#000" /></svg>
            <NotifyBadge>2</NotifyBadge>
          </Notify>
        </Tray>
      </TaskBar>
    </Page>
  );
}
